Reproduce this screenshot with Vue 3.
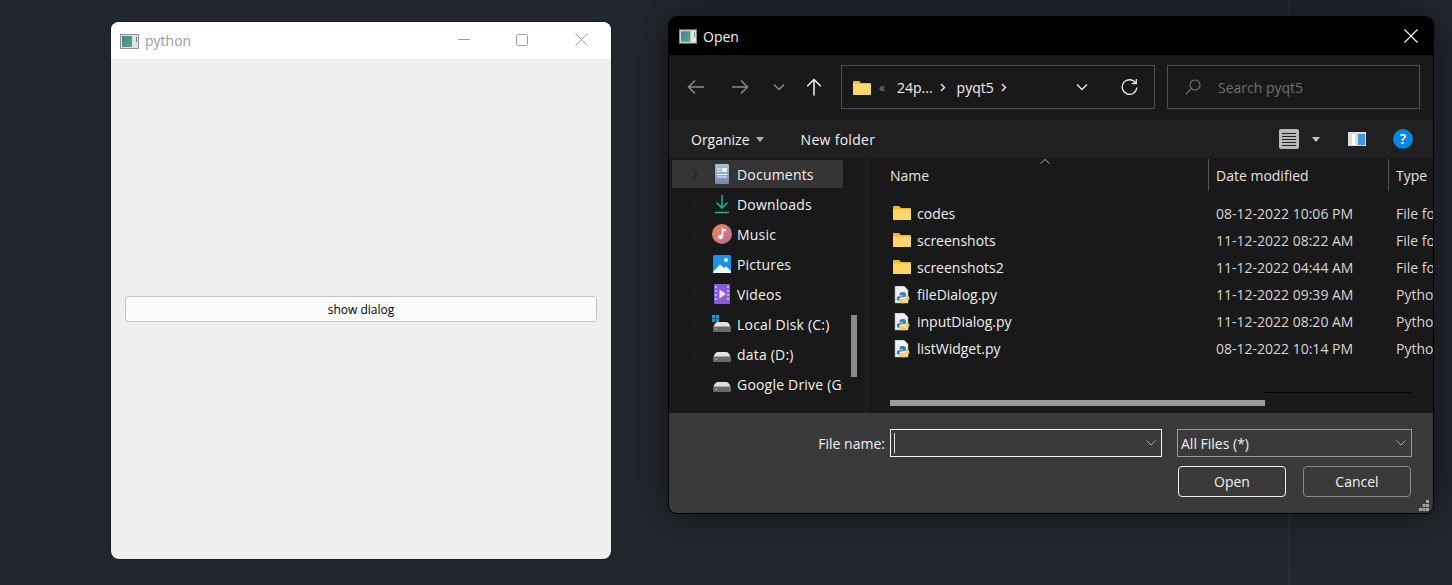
<template>
  <div class="desktop">
    <div class="vline"></div>

    <!-- qt window -->
    <div class="win">
      <div class="win-title">
        <svg class="app-icon" width="19" height="15" viewBox="0 0 19 15">
          <rect x="0.5" y="0.5" width="18" height="14" fill="#dfe3e3" stroke="#8c9296" />
          <rect x="2" y="2" width="10" height="11" fill="url(#qtgrad)" />
          <rect x="16" y="3" width="1" height="5" fill="#4f8a78" />
          <defs>
            <linearGradient id="qtgrad" x1="0" y1="0" x2="1" y2="1">
              <stop offset="0" stop-color="#3f7fa8" />
              <stop offset="1" stop-color="#5fa76c" />
            </linearGradient>
          </defs>
        </svg>
        <span class="win-name">python</span>
        <div class="win-btns">
          <svg width="12" height="12" viewBox="0 0 12 12"><path d="M0 5.500h12" stroke="#9b9b9b" /></svg>
          <svg width="12" height="12" viewBox="0 0 12 12"><rect x="0.5" y="0.5" width="11" height="11" rx="2" fill="none" stroke="#9b9b9b" /></svg>
          <svg width="13" height="13" viewBox="0 0 13 13"><path d="M0.500 0.500l12 12M12.500 0.500l-12 12" stroke="#9b9b9b" /></svg>
        </div>
      </div>
      <div class="win-body">
        <button class="show-btn">show dialog</button>
      </div>
    </div>

    <!-- file dialog -->
    <div class="dlg">
      <div class="dlg-title">
        <svg width="18" height="15" viewBox="0 0 19 15">
          <rect x="0.5" y="0.5" width="18" height="14" fill="#dfe3e3" stroke="#8c9296" />
          <rect x="2" y="2" width="10" height="11" fill="url(#qtgrad)" />
          <rect x="16" y="3" width="1" height="5" fill="#4f8a78" />
        </svg>
        <span class="dlg-name">Open</span>
        <svg class="dlg-close" width="14" height="14" viewBox="0 0 14 14"><path d="M0.500 0.500l13 13M13.500 0.500l-13 13" stroke="#fff" stroke-width="1.100" /></svg>
      </div>

      <div class="nav">
        <div class="nav-btn w44">
          <svg width="18" height="16" viewBox="0 0 18 16"><path d="M17 8H1.500M8 1.500L1.500 8 8 14.500" fill="none" stroke="#8a8a8a" stroke-width="1.500" /></svg>
        </div>
        <div class="nav-btn w44">
          <svg width="18" height="16" viewBox="0 0 18 16"><path d="M1 8h15.500M10 1.500L16.500 8 10 14.500" fill="none" stroke="#8a8a8a" stroke-width="1.500" /></svg>
        </div>
        <div class="nav-btn w34">
          <svg width="12" height="8" viewBox="0 0 12 8"><path d="M1 1.500L6 6.500 11 1.500" fill="none" stroke="#8a8a8a" stroke-width="1.500" /></svg>
        </div>
        <div class="nav-btn w36">
          <svg width="16" height="18" viewBox="0 0 16 18"><path d="M8 17.500V1.500M1.200 8.200L8 1.500l6.800 6.700" fill="none" stroke="#f2f2f2" stroke-width="1.500" /></svg>
        </div>
        <div class="address">
          <svg width="18" height="15" viewBox="0 0 18 15">
            <path d="M0 2a1 1 0 0 1 1-1h5l2 2h9a1 1 0 0 1 1 1v10a1 1 0 0 1-1 1H1a1 1 0 0 1-1-1z" fill="#f2b92f" />
            <path d="M0 4h18v10a1 1 0 0 1-1 1H1a1 1 0 0 1-1-1z" fill="#fbd668" />
          </svg>
          <span class="crumb-more">«</span>
          <span class="crumb">24p...</span>
          <svg class="crumb-sep" width="6" height="9" viewBox="0 0 6 9"><path d="M1 1l3.500 3.500L1 8" fill="none" stroke="#f0f0f0" stroke-width="1.400" /></svg>
          <span class="crumb crumb-last">pyqt5</span>
          <svg class="crumb-sep" width="6" height="9" viewBox="0 0 6 9"><path d="M1 1l3.500 3.500L1 8" fill="none" stroke="#f0f0f0" stroke-width="1.400" /></svg>
          <div class="addr-down">
            <svg width="12" height="8" viewBox="0 0 12 8"><path d="M1 1.500L6 6.500 11 1.500" fill="none" stroke="#e8e8e8" stroke-width="1.400" /></svg>
          </div>
          <div class="addr-refresh">
            <svg width="17" height="18" viewBox="0 0 17 18"><path d="M14.600 5A7.300 7.300 0 1 0 15.800 9.500M15.300 1v4.500h-4.500" fill="none" stroke="#e8e8e8" stroke-width="1.300" /></svg>
          </div>
        </div>
        <div class="search">
          <svg width="16" height="16" viewBox="0 0 16 16"><circle cx="10" cy="6" r="5" fill="none" stroke="#777" stroke-width="1.100" /><path d="M6.300 9.700L0.700 15.300" stroke="#777" stroke-width="1.100" /></svg>
          <span>Search pyqt5</span>
        </div>
      </div>

      <div class="toolbar">
        <span class="tool">Organize</span>
        <span class="caret"></span>
        <span class="tool new-folder">New folder</span>
        <div class="tool-right">
          <svg width="20" height="20" viewBox="0 0 20 20">
            <rect width="20" height="20" rx="2" fill="#b9b9b9" />
            <path d="M3 4.500h14M3 7.500h14M3 10.500h14M3 13.500h14M3 16.500h14" stroke="#222" />
          </svg>
          <span class="caret view-caret"></span>
          <svg class="pane-icon" width="18" height="14" viewBox="0 0 18 14">
            <rect width="18" height="14" fill="#dcdcdc" />
            <rect x="4" y="2" width="3" height="11" fill="#fff" />
            <rect x="10" y="2" width="7" height="11" fill="#3f97e6" />
          </svg>
          <svg class="help-icon" width="20" height="20" viewBox="0 0 20 20">
            <circle cx="10" cy="10" r="10" fill="#0b86dd" />
            <text x="10" y="15" text-anchor="middle" class="help-q">?</text>
          </svg>
        </div>
      </div>

      <div class="panes">
        <div class="side">
          <div class="side-list">
            <div v-for="(item, i) in places" :key="item.name" class="place" :class="{ active: i === 0 }">
              <svg class="chev" width="6" height="10" viewBox="0 0 6 10"><path d="M1 1l4 4-4 4" fill="none" stroke="#242424" stroke-width="1.200" /></svg>
              <div class="place-icon">
                <svg v-if="item.kind === 'doc'" width="16" height="20" viewBox="0 0 16 20">
                  <defs>
                    <linearGradient id="docgrad" x1="0" y1="0" x2="0" y2="1">
                      <stop offset="0" stop-color="#a9c0dc" />
                      <stop offset="1" stop-color="#7089ad" />
                    </linearGradient>
                  </defs>
                  <rect width="14" height="20" x="1" rx="1.500" fill="url(#docgrad)" />
                  <rect x="8" y="4" width="5" height="4" fill="#f2f5fa" />
                  <path d="M3 5h4M3 7.500h4M3 10.500h10M3 13h10" stroke="#f2f5fa" />
                </svg>
                <svg v-else-if="item.kind === 'down'" width="16" height="20" viewBox="0 0 16 20">
                  <path d="M8 1v13M2.500 8.500L8 14l5.500-5.500" fill="none" stroke="#15b193" stroke-width="1.600" />
                  <path d="M1 18.500h14" stroke="#15b193" stroke-width="1.600" />
                </svg>
                <svg v-else-if="item.kind === 'music'" width="20" height="20" viewBox="0 0 20 20">
                  <circle cx="10" cy="10" r="10" fill="url(#musicgrad)" />
                  <path d="M10.500 4.500v8" stroke="#fff" stroke-width="1.600" />
                  <path d="M10.500 4.500l3.500 1v2l-3.500-1z" fill="#fff" />
                  <circle cx="8.500" cy="13" r="2.300" fill="#fff" />
                  <defs>
                    <linearGradient id="musicgrad" x1="0" y1="0" x2="1" y2="1">
                      <stop offset="0" stop-color="#f08a4b" />
                      <stop offset="1" stop-color="#b56bb0" />
                    </linearGradient>
                  </defs>
                </svg>
                <svg v-else-if="item.kind === 'pic'" width="18" height="18" viewBox="0 0 18 18">
                  <rect width="18" height="18" rx="1.500" fill="#1b92e4" />
                  <path d="M0 17L7 9.500 11 13l2-1.500L18 16v2H0z" fill="#f4f8fc" />
                  <circle cx="13" cy="5" r="2" fill="#e8f3fc" />
                </svg>
                <svg v-else-if="item.kind === 'video'" width="18" height="20" viewBox="0 0 18 20">
                  <rect width="16" height="20" x="1" rx="1" fill="#8a5bd8" />
                  <path d="M3 2v2M3 6v2M3 10v2M3 14v2M15 2v2M15 6v2M15 10v2M15 14v2" stroke="#d9c8f5" stroke-width="1.500" />
                  <path d="M6.500 5.500v9L13 10z" fill="#efe7fb" />
                </svg>
                <svg v-else width="20" height="18" viewBox="0 0 20 18">
                  <template v-if="item.kind === 'sys'">
                    <path d="M0 0h3.200v3.200H0zM3.800 0H7v3.200H3.800zM0 3.800h3.200V7H0zM3.800 3.800H7V7H3.800z" fill="#1b92e4" />
                  </template>
                  <path d="M1.500 12Q3 7 6 7h8q3 0 4.500 5z" fill="#e2e2e2" />
                  <rect x="1" y="11.500" width="18" height="5.500" rx="1" fill="#6a6a6a" />
                  <rect x="3.500" y="13.500" width="1.500" height="1.500" fill="#4be070" />
                </svg>
              </div>
              <span class="place-name">{{ item.name }}</span>
            </div>
          </div>
          <div class="side-scroll">
            <div class="side-thumb"></div>
          </div>
        </div>

        <div class="files">
          <div class="head">
            <div class="col-name">Name<svg class="sort" width="10" height="5" viewBox="0 0 10 5"><path d="M0.500 4.500L5 0.500l4.500 4" fill="none" stroke="#aaa" /></svg></div>
            <div class="col-date">Date modified</div>
            <div class="col-type">Type</div>
          </div>
          <div class="rows">
            <div v-for="f in files" :key="f.name" class="row">
              <div class="col-name">
                <svg v-if="f.folder" class="file-icon folder" width="18" height="14" viewBox="0 0 18 14">
                  <path d="M0 1a1 1 0 0 1 1-1h5l2 2h9a1 1 0 0 1 1 1v10a1 1 0 0 1-1 1H1a1 1 0 0 1-1-1z" fill="#f2b92f" />
                  <path d="M0 3.500h18V13a1 1 0 0 1-1 1H1a1 1 0 0 1-1-1z" fill="#fbd668" />
                </svg>
                <svg v-else class="file-icon" width="19" height="18" viewBox="0 0 19 18">
                  <path d="M2 0h9l4 4v13H2z" fill="#eef0f3" stroke="#9aa0a6" stroke-width="0.600" />
                  <path d="M9.500 6c-2 0-3 .8-3 2v1.500H10v.700H5.500c-1.200 0-1.700 1-1.700 2.300s.6 2.300 1.700 2.300h1V13c0-1 .9-1.700 2-1.700h2.800c1 0 1.700-.7 1.700-1.700V8c0-1.200-1-2-3-2z" fill="#3f7fb5" />
                  <path d="M13 11c0 1-.7 2-1.700 2H8.500c-1 0-1.500.6-1.500 1.500v1c0 1 1 1.800 3 1.800s3-.8 3-1.800V15h-3v-.6h4.500c1.200 0 1.900-1 1.900-2.200s-.7-2.300-1.900-2.300H13z" fill="#f7cf4a" />
                </svg>
                <span>{{ f.name }}</span>
              </div>
              <div class="col-date">{{ f.date }}</div>
              <div class="col-type">{{ f.type }}</div>
            </div>
          </div>
          <div class="hline"></div>
          <div class="hthumb"></div>
        </div>
      </div>

      <div class="footer">
        <div class="foot-row">
          <label class="foot-label">File name:</label>
          <div class="name-input">
            <span class="cursor"></span>
            <svg width="10" height="6" viewBox="0 0 10 6"><path d="M0.500 0.500L5 5l4.500-4.500" fill="none" stroke="#aaa" /></svg>
          </div>
          <div class="type-combo">
            <span>All Files (*)</span>
            <svg width="10" height="6" viewBox="0 0 10 6"><path d="M0.500 0.500L5 5l4.500-4.500" fill="none" stroke="#aaa" /></svg>
          </div>
        </div>
        <div class="foot-btns">
          <button class="dlg-btn primary">Open</button>
          <button class="dlg-btn">Cancel</button>
        </div>
        <svg class="grip" width="10" height="11" viewBox="0 0 10 11">
          <path d="M7 0h3v3H7zM3.500 4H6.500v3H3.500zM7 4h3v3H7zM0 8h3v3H0zM3.500 8H6.500v3H3.500zM7 8h3v3H7z" fill="#a5a5a5" />
        </svg>
      </div>
    </div>
  </div>
</template>

<script setup>
const places = [
  { name: "Documents", kind: "doc" },
  { name: "Downloads", kind: "down" },
  { name: "Music", kind: "music" },
  { name: "Pictures", kind: "pic" },
  { name: "Videos", kind: "video" },
  { name: "Local Disk (C:)", kind: "sys" },
  { name: "data (D:)", kind: "disk" },
  { name: "Google Drive (G:)", kind: "disk" },
];

const files = [
  { name: "codes", date: "08-12-2022 10:06 PM", type: "File folder", folder: true },
  { name: "screenshots", date: "11-12-2022 08:22 AM", type: "File folder", folder: true },
  { name: "screenshots2", date: "11-12-2022 04:44 AM", type: "File folder", folder: true },
  { name: "fileDialog.py", date: "11-12-2022 09:39 AM", type: "Python File" },
  { name: "inputDialog.py", date: "11-12-2022 08:20 AM", type: "Python File" },
  { name: "listWidget.py", date: "08-12-2022 10:14 PM", type: "Python File" },
];
</script>

<style>
html,
body {
  margin: 0;
  background: #22262e;
  overflow: hidden;
}
</style>

<style scoped>
.desktop {
  position: relative;
  width: 1452px;
  height: 585px;
  overflow: hidden;
  background: #22262e;
  font-family: "Open Sans", "Noto Sans", sans-serif;
  font-size: 14px;
}

.vline {
  position: absolute;
  left: 1289px;
  top: 0;
  width: 1px;
  height: 585px;
  background: #31353c;
}

.win {
  position: absolute;
  left: 111px;
  top: 22px;
  width: 500px;
  height: 537px;
  display: flex;
  flex-direction: column;
  border-radius: 8px;
  overflow: hidden;
  background: #efefef;
  box-shadow: 0 0 0 1px rgba(0, 0, 0, 0.25);
}

.win-title {
  height: 37px;
  flex: none;
  display: flex;
  align-items: center;
  padding-left: 9px;
  background: #fff;
}

.app-icon {
  margin-top: 2px;
}

.win-name {
  margin-left: 6px;
  color: #9a9a9a;
  font-size: 14px;
}

.win-btns {
  margin-left: auto;
  display: flex;
  align-items: center;
  gap: 46px;
  padding: 0 23px 2px 0;
}

.win-btns svg:last-child {
  margin-left: 1px;
}

.win-body {
  flex: 1;
  display: flex;
  align-items: center;
  padding: 0 14px;
}

.show-btn {
  width: 100%;
  height: 26px;
  padding: 0;
  border: 1px solid #bfc3c7;
  border-radius: 3px;
  background: #fafbfd;
  color: #000;
  font-family: "Open Sans", sans-serif;
  font-size: 12px;
}

.dlg {
  position: absolute;
  left: 669px;
  top: 17px;
  width: 764px;
  height: 496px;
  display: flex;
  flex-direction: column;
  border-radius: 8px;
  overflow: hidden;
  background: #191919;
  color: #f2f2f2;
  box-shadow: 0 0 0 1px #000, 0 0 40px rgba(0, 0, 0, 0.55);
}

.dlg-title {
  height: 38px;
  flex: none;
  display: flex;
  align-items: center;
  padding: 0 15px 0 10px;
  background: #000;
}

.dlg-name {
  margin-left: 6px;
}

.dlg-close {
  margin-left: auto;
}

.nav {
  height: 65px;
  flex: none;
  display: flex;
  align-items: flex-start;
  padding: 10px 0 0 5px;
  box-sizing: border-box;
  background: #191919;
}

.nav-btn {
  height: 44px;
  display: flex;
  align-items: center;
  justify-content: center;
}

.w44 {
  width: 44px;
}

.w34 {
  width: 34px;
}

.w36 {
  width: 36px;
}

.address {
  width: 314px;
  height: 44px;
  margin-left: 9px;
  box-sizing: border-box;
  display: flex;
  align-items: center;
  padding-left: 11px;
  border: 1px solid #4f4f4f;
}

.crumb-more {
  margin-left: 8px;
  color: #8a8a8a;
  font-size: 12px;
}

.crumb {
  margin-left: 12px;
}

.crumb-sep {
  margin-left: 7px;
}

.crumb-last {
  margin-left: 11px;
}

.addr-down {
  margin-left: auto;
  width: 46px;
  display: flex;
  justify-content: center;
}

.addr-refresh {
  width: 49px;
  display: flex;
  justify-content: center;
}

.search {
  width: 253px;
  height: 44px;
  margin-left: 12px;
  box-sizing: border-box;
  display: flex;
  align-items: center;
  gap: 17px;
  padding-left: 17px;
  border: 1px solid #4f4f4f;
  color: #707070;
}

.toolbar {
  height: 38px;
  flex: none;
  display: flex;
  align-items: center;
  padding-left: 22px;
  background: #202020;
}

.caret {
  width: 0;
  height: 0;
  margin-left: 6px;
  border-left: 4.5px solid transparent;
  border-right: 4.5px solid transparent;
  border-top: 5px solid #b5b5b5;
}

.new-folder {
  margin-left: 37px;
  letter-spacing: 0.3px;
}

.tool-right {
  margin-left: auto;
  display: flex;
  align-items: center;
  padding-right: 20px;
}

.view-caret {
  margin-left: 13px;
  border-top-color: #c8c8c8;
}

.pane-icon {
  margin-left: 28px;
}

.help-icon {
  margin-left: 27px;
}

.help-q {
  fill: #fff;
  font-size: 14px;
  font-weight: 600;
}

.panes {
  height: 255px;
  flex: none;
  display: flex;
}

.side {
  width: 199px;
  flex: none;
  display: flex;
  box-sizing: border-box;
  padding-left: 3px;
  border-right: 3px solid #202020;
}

.side-list {
  width: 171px;
  flex: none;
  padding-top: 1px;
  overflow: hidden;
}

.place {
  height: 30px;
  display: flex;
  align-items: center;
  white-space: nowrap;
}

.place.active {
  height: 28px;
  margin: 1px 0;
  background: #353535;
  border-radius: 2px;
}

.chev {
  flex: none;
  margin-left: 20px;
}

.place-icon {
  width: 24px;
  flex: none;
  margin-left: 12px;
  display: flex;
  justify-content: center;
}

.place-name {
  margin-left: 3px;
  letter-spacing: 0.2px;
}

.side-scroll {
  flex: 1;
  padding: 157px 0 0 8px;
}

.side-thumb {
  width: 6px;
  height: 62px;
  background: #8a8a8a;
}

.files {
  flex: 1;
  min-width: 0;
  overflow: hidden;
  display: flex;
  flex-direction: column;
}

.head {
  position: relative;
  height: 33px;
  flex: none;
  display: flex;
  align-items: center;
  color: #e4e4e4;
}

.head .col-date,
.head .col-type {
  align-self: flex-end;
  height: 32px;
  line-height: 34px;
  box-sizing: border-box;
  border-left: 1px solid #555;
  padding-left: 7px;
}

.head .col-name {
  position: relative;
  display: block;
  align-self: flex-end;
  height: 32px;
  line-height: 34px;
}

.sort {
  position: absolute;
  left: 150px;
  top: 0;
}

.col-name {
  width: 318px;
  margin-left: 22px;
  flex: none;
  display: flex;
  align-items: center;
}

.col-date {
  width: 180px;
  flex: none;
}

.col-type {
  flex: none;
  white-space: nowrap;
}

.rows {
  padding-top: 9px;
}

.row {
  height: 27px;
  display: flex;
  align-items: center;
  color: #f0f0f0;
}

.row .col-date {
  padding-left: 8px;
  box-sizing: border-box;
  color: #d6d6d6;
}

.row .col-type {
  padding-left: 8px;
  color: #d6d6d6;
}

.file-icon {
  flex: none;
  margin: 0 5px 0 3px;
}

.file-icon.folder {
  margin: 0 6px 2px 3px;
}

.hline {
  width: 146px;
  height: 1px;
  margin: 30px 0 0 397px;
  background: #000;
}

.hthumb {
  width: 375px;
  height: 6px;
  margin: 7px 0 0 22px;
  background: #9a9a9a;
}

.footer {
  position: relative;
  flex: 1;
  background: #3a3a3a;
  box-sizing: border-box;
  padding-top: 16px;
}

.foot-row {
  height: 28px;
  display: flex;
  align-items: center;
  padding-left: 148px;
}

.foot-label {
  width: 68px;
  margin-right: 5px;
  text-align: right;
  white-space: nowrap;
}

.name-input,
.type-combo {
  height: 28px;
  box-sizing: border-box;
  display: flex;
  align-items: center;
  justify-content: space-between;
  padding: 0 5px 0 3px;
}

.name-input {
  width: 272px;
  border: 1px solid #f4f4f4;
}

.type-combo {
  width: 235px;
  margin-left: 15px;
  border: 1px solid #9a9a9a;
}

.cursor {
  width: 1px;
  height: 20px;
  background: #e0e0e0;
}

.foot-btns {
  display: flex;
  justify-content: flex-end;
  gap: 17px;
  margin-top: 9px;
  padding-right: 22px;
}

.dlg-btn {
  width: 108px;
  height: 31px;
  padding: 0;
  box-sizing: border-box;
  border: 1px solid #8a8a8a;
  border-radius: 4px;
  background: #3a3a3a;
  color: #f2f2f2;
  font-family: "Open Sans", sans-serif;
  font-size: 14px;
}

.dlg-btn.primary {
  border-color: #f0f0f0;
}

.grip {
  position: absolute;
  right: 4px;
  bottom: 2px;
}
</style>
